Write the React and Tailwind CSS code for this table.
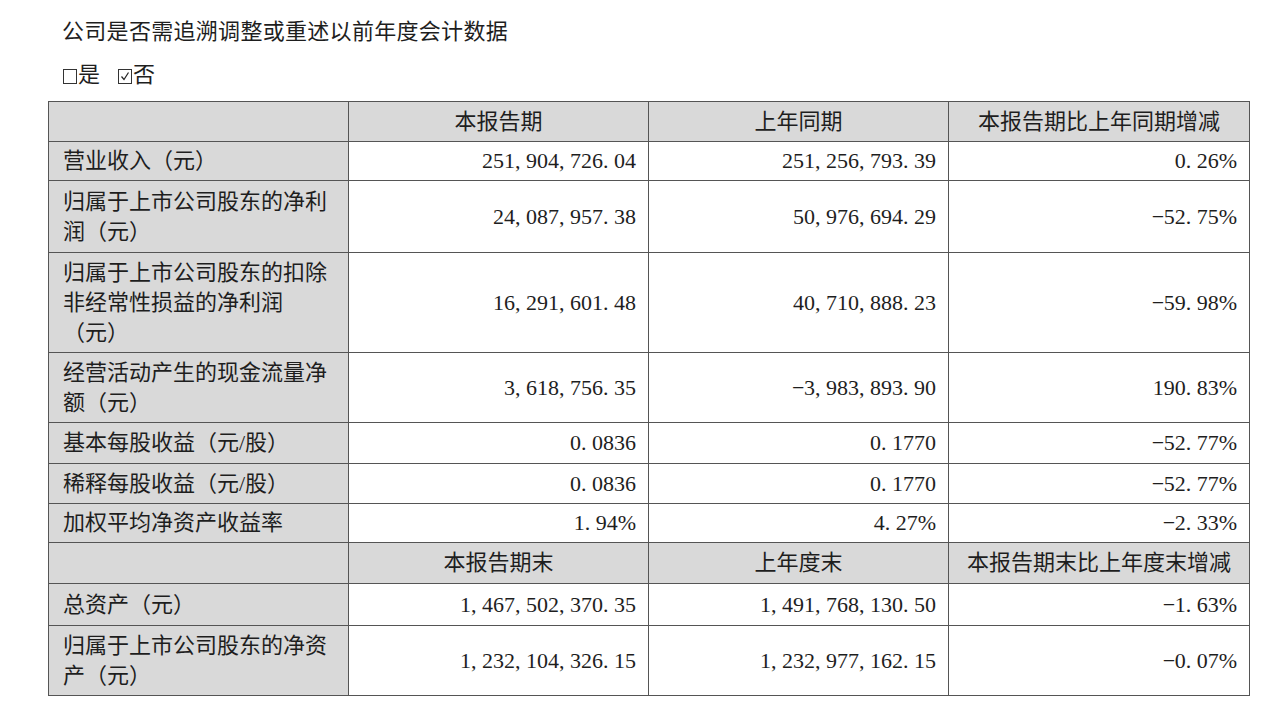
const rows = [
    { label: ['营业收入（元）'], values: ['251,904,726.04', '251,256,793.39', '0.26%'], h: 'h-[39px]' },
    { label: ['归属于上市公司股东的净利', '润（元）'], values: ['24,087,957.38', '50,976,694.29', '-52.75%'], h: 'h-[72px]' },
    { label: ['归属于上市公司股东的扣除', '非经常性损益的净利润', '（元）'], values: ['16,291,601.48', '40,710,888.23', '-59.98%'], h: 'h-[100px]' },
    { label: ['经营活动产生的现金流量净', '额（元）'], values: ['3,618,756.35', '-3,983,893.90', '190.83%'], h: 'h-[70px]' },
    { label: ['基本每股收益（元/股）'], values: ['0.0836', '0.1770', '-52.77%'], h: 'h-[41px]' },
    { label: ['稀释每股收益（元/股）'], values: ['0.0836', '0.1770', '-52.77%'], h: 'h-[40px]' },
    { label: ['加权平均净资产收益率'], values: ['1.94%', '4.27%', '-2.33%'], h: 'h-[39px]' },
]

const tailRows = [
    { label: ['总资产（元）'], values: ['1,467,502,370.35', '1,491,768,130.50', '-1.63%'], h: 'h-[42px]' },
    { label: ['归属于上市公司股东的净资', '产（元）'], values: ['1,232,104,326.15', '1,232,977,162.15', '-0.07%'], h: 'h-[70px]' },
]

// 宋体的逗号、小数点和负号都占半角宽度
function Num({ text }) {
    return text.split('').map((c, i) => {
        if (c === ',' || c === '.') {
            return <span key={i} className="inline-block w-[11px] text-left">{c}</span>
        }
        if (c === '-') {
            return <span key={i} className="inline-block w-[12px] text-center">−</span>
        }
        return <span key={i}>{c}</span>
    })
}

function HeadRow({ cols, h }) {
    return (
        <tr className={`${h} bg-[#d9d9d9]`}>
            <td className="border border-[#555]" />
            {cols.map((c) => (
                <td key={c} className="border border-[#555] text-center align-middle">{c}</td>
            ))}
        </tr>
    )
}

function DataRow({ row }) {
    return (
        <tr className={row.h}>
            <td className="border border-[#555] bg-[#d9d9d9] pl-[14px] pr-[8px] align-middle">
                {row.label.map((l, i) => (
                    <div key={i}>{l}</div>
                ))}
            </td>
            {row.values.map((v, i) => (
                <td key={i} className="border border-[#555] pr-[12px] text-right align-middle whitespace-nowrap">
                    <Num text={v} />
                </td>
            ))}
        </tr>
    )
}

function Box({ checked }) {
    return (
        <span className="inline-block w-[14px] h-[15px] border border-[#333] relative top-[1px] mr-[1px]">
            {checked && (
                <svg viewBox="0 0 12 13" className="w-full h-full">
                    <path d="M2.5 6.5 L5 9.5 L9.5 2.5" fill="none" stroke="#222" strokeWidth="1.2" />
                </svg>
            )}
        </span>
    )
}

export default function App() {
    return (
        <div className="min-h-screen bg-white text-[#1e1e1e] text-[22px] leading-[30px] font-['Liberation_Serif','Noto_Sans_CJK_SC',serif] pt-[17px] pl-[48px]">
            <p className="pl-[14px] h-[30px] tracking-[0.3px]">公司是否需追溯调整或重述以前年度会计数据</p>
            <p className="pl-[15px] mt-[13px] h-[30px] flex items-center">
                <Box />
                <span>是</span>
                <span className="w-[18px]" />
                <Box checked />
                <span>否</span>
            </p>
            <table className="mt-[11px] table-fixed border-collapse border border-[#555] w-[1201px]">
                <colgroup>
                    <col className="w-[300px]" />
                    <col className="w-[300px]" />
                    <col className="w-[300px]" />
                    <col className="w-[301px]" />
                </colgroup>
                <tbody>
                    <HeadRow cols={['本报告期', '上年同期', '本报告期比上年同期增减']} h="h-[40px]" />
                    {rows.map((r) => (
                        <DataRow key={r.label.join('')} row={r} />
                    ))}
                    <HeadRow cols={['本报告期末', '上年度末', '本报告期末比上年度末增减']} h="h-[41px]" />
                    {tailRows.map((r) => (
                        <DataRow key={r.label.join('')} row={r} />
                    ))}
                </tbody>
            </table>
        </div>
    )
}
